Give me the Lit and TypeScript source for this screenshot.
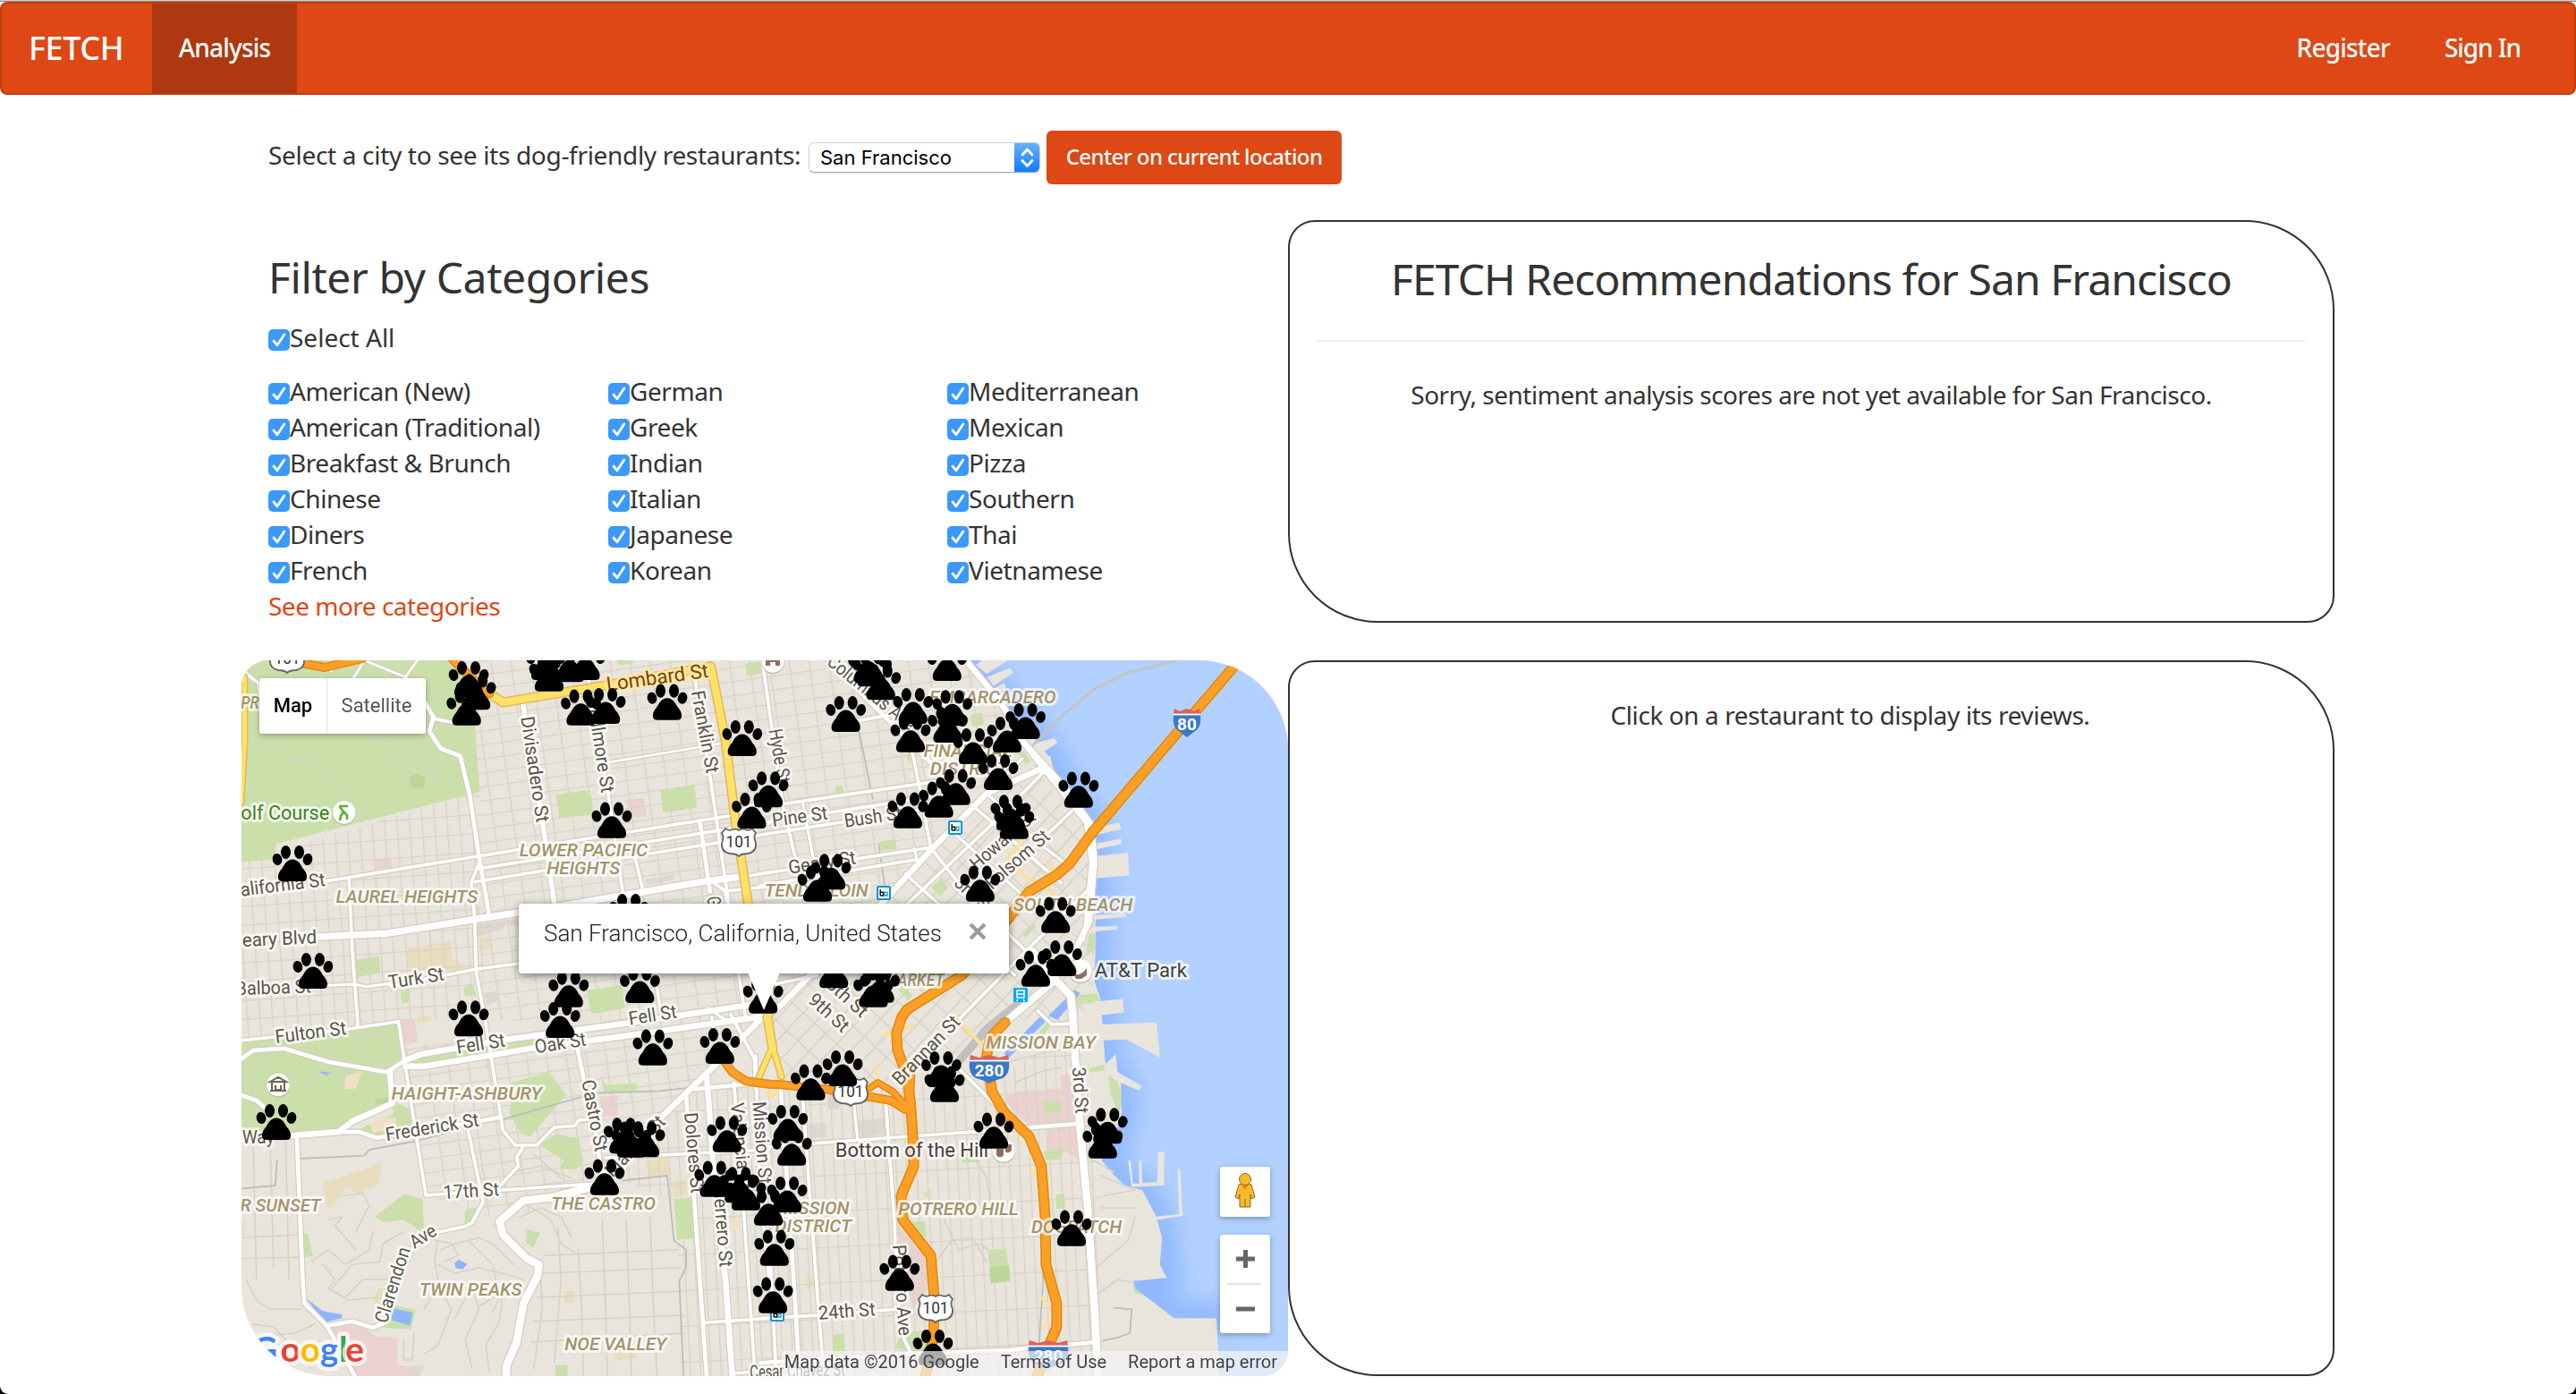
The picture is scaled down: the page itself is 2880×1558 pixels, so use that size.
import { LitElement, html, svg, css } from "lit";
import { customElement } from "lit/decorators.js";

type Pt = [number, number];

/* Survey sheets: origin and scale of each quarter of the street map. */
const SHEETS: Record<string, [number, number, number, number]> = {
  A: [260, 730, 600 / 1568, 1 / 3],
  B: [850, 730, 620 / 1568, 1 / 3],
  C: [260, 1130, 600 / 1568, 1 / 3],
  D: [850, 1130, 620 / 1568, 1 / 3],
};

const at = (s: string, x: number, y: number): Pt => {
  const [ox, oy, sx, sy] = SHEETS[s];
  return [+(ox + x * sx).toFixed(1), +(oy + y * sy).toFixed(1)];
};

/* "A 10,20 30,40 B 5,6" -> SVG points; a letter switches the sheet. */
const pts = (src: string): string => {
  let s = "A";
  const out: string[] = [];
  for (const tok of src.trim().split(/\s+/)) {
    if (SHEETS[tok]) s = tok;
    else {
      const [x, y] = tok.split(",").map(Number);
      out.push(at(s, x, y).join(","));
    }
  }
  return out.join(" ");
};

const WATER =
  "B 590,20 640,90 690,175 760,262 812,340 850,440 925,560 948,640 948,990 945,1100 962,1160 960,1200 D 965,0 972,110 975,170 1020,240 1022,340 1000,440 965,500 1000,550 1030,585 1080,600 1120,690 1136,760 1130,850 1150,895 1055,905 1060,930 1110,975 1170,1030 1290,1030 1295,1150 1300,1240 1520,1240 B 1520,20";

const PIERS = [
  "B 610,40 625,24 700,24 640,70", "B 640,80 705,50 716,65 660,110", "B 660,118 690,100 695,118 672,135",
  "B 765,305 830,285 842,300 780,345", "B 800,345 820,345 826,372 812,378", "B 945,585 1015,568 1020,590 948,610",
  "B 945,640 1020,622 1022,640 948,658", "B 945,680 1040,670 1043,745 945,755", "B 945,878 1032,872 1034,884 945,893",
  "B 940,918 1008,914 1010,926 940,934", "B 945,1168 1025,1160 1028,1205 950,1215",
  "D 960,45 1120,38 1130,155 1035,95 965,98", "D 975,180 1005,145 1010,205 1077,250 1072,267 1000,230",
  "D 1040,502 1047,502 1054,578 1071,578 1071,502 1078,502 1080,576 1123,574 1125,472 1142,472 1142,584 1050,590",
  "D 1110,690 1184,682 1180,530 1187,530 1195,686 1125,700",
];

const PARKS = [
  "A 40,20 640,20 700,120 722,465 125,640 125,692 20,700 20,60", "A 945,475 1045,458 1055,540 955,552",
  "A 1250,460 1350,442 1356,518 1258,535", "A 362,1028 428,1016 432,1072 364,1085", "A 676,1118 700,1112 714,1150 678,1148",
  "A 490,1135 515,1128 520,1168 494,1175", "A 1035,1130 1138,1112 1145,1190 1048,1210", "A 1500,35 1540,28 1545,68 1502,75",
  "A 1120,24 1172,24 1170,34 1130,40", "B 595,205 628,200 632,240 598,246", "B 415,335 432,330 434,356 416,360",
  "B 212,446 232,442 236,470 214,476", "B 338,632 382,624 386,655 342,662", "B 485,785 510,755 532,785 507,815",
  "B 742,945 775,905 778,920 750,955", "B 720,320 740,325 765,362 750,372", "B 860,455 880,465 890,500 870,490",
  "B 890,1148 950,1140 965,1172 895,1176", "B 385,1120 410,1115 430,1150 418,1165", "B 930,940 945,940 948,995 920,1010",
  "C 20,105 480,38 500,160 450,205 465,250 470,320 350,370 310,402 180,412 20,395",
  "C 465,300 520,330 528,410 420,415 365,400 470,345", "C 815,240 925,205 975,280 870,420 845,412 810,345",
  "C 500,165 800,100 890,95 890,110 560,178", "C 898,450 945,412 1010,430 1025,500 1005,530 955,530 968,500",
  "C 1078,222 1090,248 1182,242 1180,268 1085,272", "C 1290,630 1342,624 1350,762 1298,768",
  "C 415,690 500,615 555,630 560,745 500,700 440,708", "C 680,665 712,660 700,708 678,712", "C 860,732 898,745 880,792 858,780",
  "C 205,745 220,745 235,822 208,826", "C 470,985 536,1003 520,1068 430,1060", "C 943,1188 978,1186 980,1230 945,1230",
  "D 920,195 970,180 975,200 925,206", "D 985,215 1005,218 1026,290 1015,345 990,280", "D 800,305 848,300 850,338 802,342",
  "D 805,468 858,462 850,498 806,498", "D 570,490 615,486 622,506 572,508", "D 425,708 465,704 470,760 445,750",
  "D 835,614 860,612 862,662 838,664", "D 645,802 695,796 706,905 650,914", "D 205,1086 236,1082 240,1150 206,1150",
  "D 400,1080 470,1070 480,1150 380,1130", "D 1052,918 1085,925 1086,952 1060,948", "D 780,80 812,36 822,45 800,85",
];
const PARKS_DARK = ["A 517,415 540,405 562,415 560,450 538,456 517,445", "D 650,860 704,852 706,905 652,912", "C 415,295 455,290 450,320 420,310"];
const CLINICS = [
  "A 1150,492 1200,485 1210,545 1180,552 1155,520", "A 415,692 462,685 468,720 418,725", "A 800,895 850,885 850,915 815,915",
  "C 488,28 532,24 542,104 500,112", "C 1072,288 1125,282 1126,350 1080,355", "D 848,215 875,212 880,262 850,266",
  "D 690,290 730,268 895,258 900,375 760,378 720,345", "D 806,400 895,385 898,495 850,465 810,465", "D 385,715 475,830 480,925 430,1000",
  "C 285,1058 370,1048 420,1092 482,1095 482,1190 528,1190 515,1230 355,1230",
];
const SCHOOLS = [
  "A 508,990 635,965 642,1020 675,1050 660,1068 512,1055", "A 728,950 755,945 760,990 722,998", "C 262,578 438,510 425,580 370,612 330,590 295,658 278,658",
  "C 1208,502 1272,492 1276,548 1214,558", "C 1283,570 1325,568 1330,618 1290,622", "C 968,940 998,938 1000,978 970,980",
  "C 1115,1148 1175,1144 1180,1165 1118,1170", "C 425,930 440,930 430,985 410,970", "C 20,708 38,708 36,755 20,755", "C 535,20 580,14 582,30 540,42",
  "D 460,605 486,602 486,628 462,630", "D 130,892 155,890 155,925 132,926", "D 180,685 205,683 207,700 182,702",
];
const SAND = ["C 330,218 378,202 360,260 325,262", "C 400,375 430,352 478,360 478,392 410,408", "C 1450,690 1482,700 1480,735 1455,730"];
const GRAY = ["A 1205,760 1290,742 1290,760 1210,778", "A 715,910 800,895 790,925 715,950", "A 735,1140 775,1132 778,1165 740,1180", "D 190,270 230,300 220,330 190,328", "D 275,368 350,358 356,414 280,422", "D 135,378 185,375 188,422 138,425", "C 482,1190 560,1190 545,1230 520,1230"];
const PONDS = [
  "C 215,962 262,1005 320,1018 320,1030 268,1044", "C 470,996 526,1012 518,1054 462,1036", "C 648,846 660,833 686,848 672,866 652,862",
  "C 252,202 288,208 275,220", "B 815,1215 890,1130 905,1140 840,1230", "D 690,140 790,20 820,20 700,160",
];

/* [width, points] */
type Road = [number, string];
const LANES: string[] = [
  "A 50,320 100,270 200,240 300,230 420,250", "A 120,300 180,360 250,350 280,420 350,480 350,520", "A 400,240 460,320 460,400",
  "A 480,260 520,330 510,460", "A 300,120 330,200 420,230 560,240", "A 600,320 540,300 500,250", "A 560,380 610,400 600,425 540,350",
  "C 60,180 120,120 200,110 320,170", "C 340,130 380,80 440,85 450,120 440,190", "C 210,260 250,220 380,190", "C 130,230 60,280 50,180",
  "C 230,840 280,800 330,850 400,800 410,740", "C 290,930 350,850 430,840 440,780 500,740", "C 330,960 380,900 450,900 520,820",
  "C 265,850 300,900 280,930 340,970 420,960", "C 610,800 650,780 720,760 760,780 820,850", "C 600,850 650,880 720,860 790,880 850,900",
  "C 560,1000 600,920 640,1000 600,1120 560,1150", "C 650,1030 700,920 720,1000 680,1100 700,1200", "C 720,990 790,940 780,1040 740,1120 750,1210",
  "C 690,770 760,850 780,960 760,1010", "C 600,770 590,840 600,900", "C 840,690 900,660 960,690 990,760", "C 860,650 930,700 960,780 1000,810",
  "C 280,700 320,690 300,720 360,800", "C 320,620 380,610 400,650 360,740", "C 560,760 640,780 660,820 620,840",
  "C 40,900 70,970 110,1000 200,1000", "C 60,1050 120,1060 170,1120 230,1200", "C 90,1090 180,1080 240,1050", "C 500,1100 500,1170 525,1170 530,1080",
  "C 820,540 900,520 990,560", "C 880,480 900,500 960,560", "D 600,480 640,560 650,640", "D 460,900 540,770 600,760 640,840",
  "D 520,700 560,800 620,780 700,850", "D 960,660 1060,660", "D 950,860 1040,770 1060,690", "D 970,420 910,480 1000,540", "D 700,170 800,140 860,130",
  "D 720,240 800,200 850,190", "D 960,550 1060,600 970,620", "D 940,960 1010,900 1050,910",
  "C 900,900 905,1000 880,1200", "C 950,720 960,900 940,1180", "C 1010,800 1020,1000 1025,1220", "C 1080,700 1090,1000 1095,1220", "C 1150,700 1160,1000 1165,1220",
  "C 1220,690 1230,1000 1240,1220", "C 900,880 1310,860", "C 890,960 1310,940", "C 880,1040 1320,1020", "C 870,1110 1320,1080", "C 910,820 1300,800",
  "C 60,440 70,900", "C 110,440 120,860", "C 155,440 165,900", "C 26,760 200,750", "C 26,830 205,825", "C 26,670 195,665",
];
const RAILS: string[] = [
  "C 785,365 905,325 1030,285 1070,275 1250,268 1350,255", "C 26,595 125,585 130,500", "C 190,495 385,485 400,465 540,435 640,405",
  "C 1140,568 1270,552 1290,770 1325,800 1325,860 1305,905 1318,1223", "B 275,240 300,380 318,490", "B 335,640 352,780",
  "D 720,350 800,540 800,900 788,1120", "D 970,1105 1010,1095 1045,1080 1050,1000 1000,995",
];
const STREETS: Road[] = [
  [4, "A 30,60 75,100 80,150"], [5, "A 560,160 587,215 575,262 608,320 665,345 692,470 720,680 750,880"], [4, "A 590,220 640,232"],
  [3, "A 385,24 350,90"], [3, "A 385,24 505,80 540,24"], [4, "A 505,80 560,160"], [3, "A 205,24 290,60"],
  [6, "A 848,165 858,240 905,560 940,840"], [4, "A 1040,90 1100,490 1140,800"], [3, "A 1095,367 1425,303"],
  [4, "A 1350,80 1400,450 1450,840"], [5, "A 1365,560 1395,800"], [4, "A 1175,680 1200,800"], [4, "A 270,765 720,680 1455,545 B 0,497 70,505 500,430"],
  [4, "A 720,722 1420,595 1568,570 B 0,570 480,482"], [4, "A 700,768 1420,635 B 0,610 200,572 480,520"],
  [8, "A 235,952 450,940 720,890 950,850 1380,765 1500,748"], [4, "A 1500,748 1568,735 B 0,740 270,690 490,650"], [4, "A 1400,765 1440,798 1568,782 B 0,780 440,692"],
  [4, "A 340,750 350,1000 365,1230 C 365,50"], [4, "A 722,700 697,770 707,880 712,1070 738,1230 C 738,30 790,400 825,450 888,450 940,390 1000,385 1012,365 1060,362"],
  [4, "A 460,1115 620,1080 710,1060 840,1040"], [3.5, "A 230,1117 355,1110 390,1118 460,1108"], [4, "A 1440,800 1500,1230"], [3.5, "A 1390,1190 1440,1230"],
  [4, "B 5,20 35,270 65,520 100,690"], [4, "B 430,330 455,480 480,640"], [3.5, "B 120,500 150,690 165,820"], [4, "B 240,235 420,195"],
  [5, "B 180,10 290,140 400,270 510,400"], [3.5, "B 435,655 445,700"], [7, "B 575,15 680,165 745,300 860,450 935,575 945,700 930,900 885,1010 830,1090"],
  [4, "B 740,300 800,390 920,570 935,700 915,960"], [7, "B 800,385 640,470 490,650 350,830 50,1190 C 1540,30 1420,170 1240,370 1090,540"],
  [4, "B 740,355 600,520 485,660"], [4, "B 480,650 600,830 700,940 850,1110"], [4, "B 600,510 850,770"], [3.5, "B 545,600 740,810"], [3.5, "B 410,740 560,900 720,1080"],
  [4, "B 930,790 750,1000 560,1230"], [4, "B 880,530 640,800 520,930"], [4, "B 800,400 640,590 390,870"], [3.5, "B 640,470 790,640 880,720"],
  [8, "B 700,1230 830,1100"], [9, "B 770,1000 830,1090 878,1150 885,1230 D 883,0 890,150 905,400 925,650 945,1000 955,1223"], [4, "D 785,0 825,45 880,42"],
  [5, "D 950,1110 700,1137 420,1150 0,1180"], [4, "A 1568,1125 B 0,1120 160,1080"], [4, "D 0,457 140,445 600,405"], [5, "D 600,405 900,378"], [4, "D 0,1030 170,1020 400,998"],
  [4, "D 355,310 380,720 385,900 400,1080 430,1160"], [4, "D 120,290 140,620 170,1080 180,1223"], [5, "D 55,210 75,560 100,1000 110,1223"], [3.5, "D 265,310 275,430"],
  [4, "D 550,180 690,345"], [4, "D 10,560 30,860 45,1223"], [4, "C 1528,150 1540,600 1568,900"], [4, "C 1465,240 1495,700 1525,1190"],
  [7, "C 1385,210 1410,600 1440,900 1460,1223"], [5, "C 1325,280 1350,650 1385,1223"], [4, "C 26,98 340,60 485,35 500,150 540,440 565,618 720,605 1050,580"],
  [7, "C 505,165 550,145 800,95 1160,40 1568,-30"], [7, "C 505,185 560,185 900,120 1140,85 1568,15"],
  [5, "C 20,165 60,132 150,125 280,170 450,205 505,165"], [7, "C 460,205 467,310 350,370 310,405 180,417 20,432"], [5, "C 20,280 70,300 110,340"],
  [5, "C 310,405 370,405 420,425 720,370 785,355"], [4, "C 852,450 830,490 835,520 770,600"], [4, "C 685,380 732,640 700,710 680,722 540,755 450,1000"],
  [5, "C 188,425 205,900 210,980 275,1055 360,1230"], [5, "C 275,1055 350,1040 410,1062 445,1045"],
  [9, "C 1050,590 930,625 850,635 780,705 790,750 860,830 895,850 890,890 850,980 830,1110 800,1190 800,1230"],
  [5, "C 1005,110 1030,250 1060,400 1085,600"], [5, "C 1350,262 1568,238"], [4, "C 1090,492 1568,465"], [4, "C 1380,1045 1568,1030"], [4, "C 1400,20 1415,130"],
  [4, "C 1455,10 1525,160 1528,260"], [4, "A 1240,1120 1250,1200"], [4, "C 1460,1215 1568,1205"],
];
const YELLOW: Road[] = [
  [9, "A 1395,45 1080,110 790,165 745,130"], [9, "A 1398,45 1440,290 1470,570 1508,850 1568,1200 D 20,20 35,125"], [6, "D 35,120 60,220"], [6, "D 30,130 -5,225"],
  [6, "A 35,80 35,300 25,500"],
];
const RAMPS: Road[] = [
  [4, "B 740,630 700,690 760,760 800,770 830,810 780,850"], [4, "B 820,700 830,770"], [4, "D 550,20 640,130"], [4, "D 350,80 430,50"], [3.5, "D 325,180 335,240"],
  [3.5, "D 20,270 35,290 50,265"], [3, "D 765,530 778,555"], [3, "D 795,960 815,990"], [3, "D 800,1065 812,1040"],
];
const FREEWAYS: Road[] = [
  [9, "A 640,15 690,75 750,135"], [8, "A 160,25 270,48 380,18"],
  [10, "B 1350,30 1180,265 940,600 875,705 840,742 760,800 700,890 570,1080 415,1195 D 400,20 385,75 388,130 415,220 425,310 432,430 434,520 398,620 403,700 482,820 492,960 490,1090 465,1235"],
  [8, "C 1432,160 1460,205 1500,235 1568,245 D 60,247 200,265 370,300 410,330"], [6, "D 310,258 332,240 375,270 415,320"], [5, "D 430,200 425,320"],
  [10, "D 692,38 650,90 640,150 655,270 690,340 760,420 795,520 805,680 808,850 838,980 838,1060 820,1110 780,1235"],
];

/* [text, sheet, x1, y1, x2, y2] along the baseline */
type Label = [string, string, number, number, number, number];
const STREET_NAMES: Label[] = [
  ["Divisadero St", "A", 842, 215, 888, 570], ["Fillmore St", "A", 1040, 190, 1078, 470], ["Franklin St", "A", 1340, 130, 1385, 405],
  ["Golf Course", "A", -14, 557, 283, 557], ["California St", "A", -8, 820, 272, 780], ["Geary Blvd", "A", -8, 986, 247, 973], ["Turk St", "A", 458, 1125, 620, 1096],
  ["Balboa St", "A", 10, 1147, 230, 1138], ["Fell St", "C", 1160, 47, 1300, 22], ["G", "A", 1386, 818, 1389, 848],
  ["Hyde St", "B", 24, 258, 50, 438], ["Columbus Ave", "B", 185, 35, 420, 262], ["Pine St", "B", 36, 582, 192, 556], ["Bush St", "B", 240, 584, 402, 556], ["Geary St", "B", 82, 740, 272, 706],
  ["Howard St", "B", 612, 730, 782, 555], ["Folsom St", "B", 655, 795, 822, 620], ["3rd St", "B", 545, 775, 640, 880],
  ["9th St", "B", 132, 1168, 232, 1275], ["8th St", "B", 183, 1115, 285, 1225],
  ["Fulton St", "C", 127, 108, 334, 78], ["Fell St", "C", 657, 143, 798, 118], ["Oak St", "C", 886, 142, 1035, 115], ["Castro St", "C", 1020, 235, 1060, 473],
  ["Frederick St", "C", 450, 436, 722, 385], ["Way", "C", 28, 445, 122, 445], ["17th St", "C", 617, 630, 780, 618], ["Market St", "C", 1110, 560, 1268, 375],
  ["Dolores St", "C", 1320, 342, 1340, 613], ["Guerrero St", "C", 1402, 555, 1424, 860], ["Valencia St", "C", 1455, 310, 1480, 600], ["Mission St", "C", 1520, 305, 1538, 580],
  ["Clarendon", "C", 450, 1050, 520, 800], ["Ave", "C", 532, 798, 600, 748], ["Brannan St", "D", 395, 252, 568, 40], ["3rd St", "D", 882, 190, 892, 345],
  ["Potrero Ave", "D", 374, 785, 392, 1090], ["24th St", "D", 166, 1034, 326, 1020], ["Cesar Chavez St", "C", 1512, 1232, 1790, 1222],
];
const AREA_NAMES: Label[] = [
  ["PR", "A", 24, 187, 78, 187], ["LOWER PACIFIC", "A", 838, 682, 1213, 682], ["HEIGHTS", "A", 918, 742, 1132, 742], ["LAUREL HEIGHTS", "A", 302, 838, 716, 838],
  ["EMBARCADERO", "B", 478, 168, 836, 168], ["FINANCIAL", "B", 462, 348, 712, 348], ["DISTRICT", "B", 480, 408, 700, 408], ["TENDERLOIN", "B", 12, 816, 305, 816],
  ["SOUTH BEACH", "B", 716, 865, 1053, 865], ["MARKET", "B", 350, 1117, 520, 1117], ["HAIGHT-ASHBURY", "C", 464, 297, 904, 297], ["R SUNSET", "C", 22, 672, 258, 672],
  ["THE CASTRO", "C", 930, 667, 1236, 667], ["TWIN PEAKS", "C", 546, 955, 845, 955], ["NOE VALLEY", "C", 970, 1137, 1268, 1137], ["MISSION BAY", "D", 638, 127, 948, 127],
  ["MISSION", "D", 50, 682, 252, 682], ["DISTRICT", "D", 42, 742, 258, 742], ["POTRERO HILL", "D", 390, 685, 730, 685], ["DOGPATCH", "D", 766, 745, 1022, 745],
];
const PLACE_NAMES: Label[] = [["AT&T Park", "B", 945, 1085, 1206, 1085], ["Bottom of the Hill", "D", 212, 488, 645, 488]];

/* Restaurant markers: sheet, centre x, bottom y */
const PAWS =
  "A:690,147 A:711,190 A:684,242 A:915,90 A:925,128 A:985,97 A:1031,90 A:1018,242 A:1090,237 A:1270,224 A:1489,345 A:1517,588 B:23,517 A:1108,620 A:175,765 A:235,1125 A:1158,927 A:982,1187 A:1190,1173 C:690,85 C:957,90 " +
  "B:305,100 B:315,112 B:341,157 B:528,93 B:432,237 B:425,332 B:543,244 B:530,300 B:602,372 B:698,333 B:750,288 B:673,459 B:900,518 B:242,264 B:417,587 B:505,551 B:553,509 B:708,595 B:718,623 B:622,833 B:200,793 B:162,833 " +
  "B:835,938 B:853,1083 B:779,1118 B:208,1123 B:338,1172 B:320,1187 B:8,1208 C:1228,182 C:1424,177 C:128,432 C:1143,478 C:1165,491 C:1205,490 C:1087,617 C:1445,473 C:1408,623 C:1480,643 C:1500,668 D:23,719 D:76,675 " +
  "D:143,299 D:233,252 D:512,255 D:521,305 D:78,435 D:89,518 D:40,854 D:36,1013 D:660,461 D:982,445 D:968,494 D:394,938 D:880,788 D:488,1188";

const LOGO: [string, number, string][] = [
  ["G", 282, "#4285f4"], ["o", 313.5, "#ea4335"], ["o", 335.5, "#fbbc05"], ["g", 358, "#4285f4"], ["l", 379, "#34a853"], ["e", 386, "#ea4335"],
];

const poly = (list: string[], cls: string) => list.map((p) => svg`<polygon class=${cls} points=${pts(p)} />`);
const lines = (list: Road[], cls: string, extra = 0) =>
  list.map(([w, p]) => svg`<polyline class=${cls} stroke-width=${w + extra} points=${pts(p)} />`);
const label = ([t, s, x1, y1, x2, y2]: Label, cls: string) => {
  const [ax, ay] = at(s, x1, y1);
  const [bx, by] = at(s, x2, y2);
  const len = Math.hypot(bx - ax, by - ay).toFixed(1);
  const deg = ((Math.atan2(by - ay, bx - ax) * 180) / Math.PI).toFixed(1);
  return svg`<text class=${cls} textLength=${len} lengthAdjust="spacingAndGlyphs" transform="translate(${ax} ${ay}) rotate(${deg})">${t}</text>`;
};

@customElement("city-map")
export class CityMap extends LitElement {
  static styles = css`
    :host { display: block; position: relative; width: 1170px; height: 800px; overflow: hidden; border-radius: 30px 100px 30px 100px; background: #e9e5dc; font-family: Roboto, "Liberation Sans", sans-serif; letter-spacing: 0; }
    .canvas { display: block; width: 1170px; height: 800px; }
    .water { fill: #b3d1ff; }
    .shore { fill: none; stroke: #86b1ff; stroke-width: 34; opacity: 0.8; }
    .land { fill: #e9e5dc; }
    .park { fill: #cadfaa; }
    .park-dark { fill: #bdd699; }
    .clinic { fill: #ebd2cf; }
    .school { fill: #e8ddbd; }
    .sand { fill: #f0e0c6; }
    .gray { fill: #dcd7d0; }
    .pond { fill: #8db6ff; }
    polyline { fill: none; stroke-linejoin: round; stroke-linecap: round; }
    .lane { stroke: #d8d2c6; stroke-width: 1.6; }
    .rail { stroke: #bdbdbd; stroke-width: 1.8; }
    .case { stroke: #d4cec1; }
    .street { stroke: #fff; }
    .yellow-case { stroke: #e2b958; }
    .yellow { stroke: #ffe168; }
    .ramp { stroke: #ffe095; }
    .fwy-case { stroke: #e18a06; }
    .fwy { stroke: #fb9f29; }
    text { paint-order: stroke; stroke: rgba(255, 255, 255, 0.72); stroke-width: 6px; stroke-linejoin: round; }
    .st { font-size: 21px; fill: #5a5546; }
    .lombard { font-size: 22px; fill: #7a3f0c; stroke: rgba(255, 235, 170, 0.8); }
    .area { font-size: 20px; font-style: italic; font-weight: 500; fill: #a3946a; }
    .place { font-size: 22px; fill: #45413a; }
    .golf { font-size: 22px; fill: #3e8122; }
    .num { font-size: 19px; fill: #333; stroke: none; text-anchor: middle; }
    .inum { font-size: 19px; font-weight: 700; fill: #fff; stroke: none; text-anchor: middle; }
    .logo { font-family: Lato, "Open Sans", sans-serif; font-size: 39px; font-weight: 700; stroke-width: 9px; stroke: rgba(255, 255, 255, 0.7); }
    .ctl { position: absolute; background: #fff; border-radius: 3px; box-shadow: 0 2px 6px rgba(0, 0, 0, 0.3); }
    .types { left: 20px; top: 20px; width: 186px; height: 62px; display: flex; font-size: 22px; line-height: 61px; }
    .type { flex: 1; text-align: center; color: #565656; }
    .type-on { flex: 0 0 75px; color: #000; font-weight: 500; border-right: 1px solid #ddd; }
    .peg { left: 1094px; top: 566px; width: 56px; height: 56px; }
    .zoom { left: 1094px; top: 642px; width: 56px; height: 110px; }
    .glyph { display: block; }
    .info { position: absolute; left: 310px; top: 272px; width: 548px; height: 78px; background: #fff; border-radius: 4px; box-shadow: 0 2px 10px rgba(0, 0, 0, 0.5); }
    .info-text { padding-left: 28px; line-height: 66px; font-size: 26px; font-weight: 300; color: #222; white-space: nowrap; }
    .tip { position: absolute; left: 255px; top: 77px; }
    .close { position: absolute; left: 503px; top: 21px; }
    .legal { position: absolute; right: 0; bottom: 0; width: 566px; height: 28px; box-sizing: border-box; display: flex; justify-content: flex-end; gap: 24px; padding: 0 12px 0 0; background: rgba(245, 245, 245, 0.7); font-size: 20px; line-height: 25px; color: #444; white-space: nowrap; }
  `;

  private usShield(x: number, y: number) {
    return svg`<g transform="translate(${x - 20} ${y - 15})">
      <path d="M5 1 Q9 4 13 2 Q17 1 20 3 Q23 1 27 2 Q31 4 35 1 L39 6 Q36 10 39 17 Q40 27 30 29 Q23 29 20 32 Q17 29 10 29 Q0 27 1 17 Q4 10 1 6 Z" fill="#fff" stroke="#666" stroke-width="1.8"/>
      <text class="num" x="20" y="22" textLength="29" lengthAdjust="spacingAndGlyphs">101</text></g>`;
  }

  private interstate(x: number, y: number, w: number, n: string) {
    const h = w / 2;
    return svg`<g transform="translate(${x} ${y})">
      <path d="M${-h + 1} -8 H${h - 1} Q${h + 1} 6 ${h - 8} 11 Q4 14 0 17 Q-4 14 ${-h + 8} 11 Q${-h - 1} 6 ${-h + 1} -8Z" fill="#3a78c8"/>
      <path d="M${-h + 1} -9 L${-h + 2} -15 L${-h / 2} -12 L0 -15 L${h / 2} -12 L${h - 2} -15 L${h - 1} -9Z" fill="#d9625e"/>
      <rect x=${-h + 1} y="-9.4" width=${w - 2} height="1.8" fill="#fff"/>
      <text class="inum" x="0" y="9">${n}</text></g>`;
  }

  private transit(x: number, y: number) {
    return svg`<g transform="translate(${x - 8} ${y - 8})"><rect x="1" y="1" width="14" height="14" rx="1.5" fill="#fff" stroke="#0a94d8" stroke-width="2"/>
      <path d="M4.2 4 V11 M4.2 7.2 H7.5 V11 H4.2" stroke="#111" stroke-width="1.5" fill="none"/><path d="M9 7.2 H12 V11 H9Z" stroke="#0a94d8" stroke-width="1.3" fill="none"/></g>`;
  }

  private badge(x: number, y: number) {
    return svg`<circle cx=${x} cy=${y + 1} r="13" fill="#b9b4a8"/><circle cx=${x} cy=${y} r="12.7" fill="#fff"/>`;
  }

  render() {
    const paws = PAWS.split(" ").map((p) => {
      const [s, c] = p.split(":");
      const [x, y] = c.split(",").map(Number);
      return at(s, x, y);
    });
    return html`
      <svg class="canvas" viewBox="270 738 1170 800">
        <defs>
          <pattern id="g1" width="22" height="15.5" patternUnits="userSpaceOnUse" patternTransform="rotate(-8)"><path d="M0 0H22M0 0V15.5" stroke="#d8d2c6" stroke-width="2.6" fill="none"/></pattern>
          <pattern id="g2" width="11.5" height="40" patternUnits="userSpaceOnUse" patternTransform="rotate(-3)"><path d="M0 0H11.5M0 0V40" stroke="#d8d2c6" stroke-width="2.6" fill="none"/></pattern>
          <pattern id="g3" width="27" height="17" patternUnits="userSpaceOnUse" patternTransform="rotate(-47)"><path d="M0 0H27M0 0V17" stroke="#d8d2c6" stroke-width="2.8" fill="none"/></pattern>
          <pattern id="g4" width="14" height="21" patternUnits="userSpaceOnUse" patternTransform="rotate(-4)"><path d="M0 0H14M0 0V21" stroke="#d8d2c6" stroke-width="2.6" fill="none"/></pattern>
          <filter id="soft" x="-20%" y="-20%" width="140%" height="140%"><feGaussianBlur stdDeviation="13"/></filter>
          <filter id="edge"><feGaussianBlur stdDeviation="0.7"/></filter>
          <clipPath id="bay"><polygon points=${pts(WATER)} /></clipPath>
          <g id="paw"><ellipse cx="-17" cy="-24.5" rx="5.3" ry="6.6" transform="rotate(-14 -17 -24.5)"/><ellipse cx="-7.5" cy="-32.5" rx="5.5" ry="7.6"/><ellipse cx="7.5" cy="-32.5" rx="5.5" ry="7.6"/><ellipse cx="17" cy="-24.5" rx="5.3" ry="6.6" transform="rotate(14 17 -24.5)"/>
          <path d="M0 -24.5 C6 -24.5 9 -19 11.5 -14.5 C15.5 -10.5 17.5 -5 15 -1.2 Q14 0 10.5 0 H-10.5 Q-14 0 -15 -1.2 C-17.5 -5 -15.5 -10.5 -11.5 -14.5 C-9 -19 -6 -24.5 0 -24.5Z"/></g>
        </defs>
        <rect x="270" y="738" width="1170" height="800" fill="#e9e5dc"/>
        ${poly(GRAY, "gray")}${poly(CLINICS, "clinic")}${poly(SCHOOLS, "school")}
        <polygon points=${pts("A 700,20 B 590,20 850,430 740,355 490,650 300,890 0,1240 A 735,1230 722,465")} fill="url(#g1)"/>
        <polygon points=${pts("A 20,700 722,465 735,1230 C 485,35 20,98")} fill="url(#g4)"/>
        <polygon points=${pts("B 740,355 945,600 945,1100 D 900,60 700,20 430,240 60,230 B 0,1200 490,650")} fill="url(#g3)"/>
        <polygon points=${pts("C 500,120 1568,-30 1350,260 1085,600 790,700 565,618")} fill="url(#g1)"/>
        <polygon points=${pts("C 1090,540 1380,250 D 440,250 700,200 900,60 960,550 955,1235 C 1310,1235 1300,800 1285,640")} fill="url(#g2)"/>
        ${poly(PARKS, "park")}${poly(PARKS_DARK, "park-dark")}${poly(SAND, "sand")}${poly(PONDS, "pond")}
        <polygon class="water" points=${pts(WATER)} />
        <g clip-path="url(#bay)"><polyline class="shore" filter="url(#soft)" points=${pts(WATER.split("1295,1150")[0])} /></g>
        ${poly(PIERS, "land")}
        <polyline points=${pts("B 770,310 850,215 945,120 1040,65 1190,20")} stroke="#c3c3c3" stroke-width="3"/>
        ${LANES.map((l) => svg`<polyline class="lane" points=${pts(l)} />`)}
        ${RAILS.map((l) => svg`<polyline class="rail" points=${pts(l)} />`)}
        <polyline points=${pts("B 680,1230 740,1165 D 640,60 560,170")} stroke="#c0c0c0" stroke-width="9"/>
        ${lines(STREETS, "case", 2)}${lines(STREETS, "street", -0.4)}
        ${lines(RAMPS, "ramp")}
        ${lines(YELLOW, "yellow-case", 2)}${lines(YELLOW, "yellow", -1)}
        ${lines(FREEWAYS, "fwy-case", 2)}${lines(FREEWAYS, "fwy", -1)}
        ${this.badge(384.7, 908)}<path d="M379 901h10M380 902l4 5-3 5-1 5M384 907l4 4v5" stroke="#5fae2e" stroke-width="2.6" fill="none"/>
        ${this.badge(311, 1212.5)}<path d="M302 1209l9-5 9 5zM304 1210v9M318 1210v9M302 1219h18M308 1213v5h6v-5" stroke="#6b6658" stroke-width="2" fill="none"/>
        ${this.badge(864, 739)}<path d="M856 735h16v9h-5v-4h-6v4h-5z" fill="#8d6e63"/>
        ${this.badge(1208, 1085)}<path d="M1200 1088q8 4 15-6v8l-6 4h-6z" fill="#8d6e63"/>
        ${this.badge(1122, 1286)}<path d="M1114 1284h8v7q-4 5-8 0zM1123 1279h8v7q-4 4-7 1z" fill="#8d6e63"/>
        ${STREET_NAMES.map((l) => label(l, l[0] === "Golf Course" ? "golf" : "st"))}
        ${label(["Lombard St", "A", 1095, 127, 1392, 80], "lombard")}
        ${AREA_NAMES.map((l) => label(l, "area"))}
        ${PLACE_NAMES.map((l) => label(l, "place"))}
        ${this.usShield(826, 940)}${this.usShield(951, 1219)}${this.usShield(1046, 1461)}${this.usShield(321, 735)}
        ${this.interstate(1327, 807, 32, "80")}${this.interstate(1106, 1194, 46, "280")}${this.interstate(1172, 1513, 46, "280")}
        ${this.transit(1068, 925)}${this.transit(988, 998)}${this.transit(869, 1469)}
        <g transform="translate(1133 1104)"><rect width="16" height="16" rx="1.5" fill="#03a9f4"/><path d="M4 3h8v8H4zM4 7h8M5 13l-1.5 2M11 13l1.5 2" stroke="#fff" stroke-width="1.5" fill="none"/></g>
        <g filter="url(#edge)">${paws.map(([x, y]) => svg`<use href="#paw" x=${x} y=${y} />`)}</g>
        <g>${LOGO.map(([c, x, f]) => svg`<text class="logo" x=${x} y="1522" fill=${f}>${c}</text>`)}</g>
      </svg>
      <div class="info">
        <div class="info-text">San Francisco, California, United States</div>
        <svg class="tip" width="38" height="43" viewBox="0 0 38 43"><path d="M1 0H37L19 42Z" fill="#fff"/></svg>
        <svg class="close" width="20" height="20" viewBox="0 0 20 20"><path d="M2 2L18 18M18 2L2 18" stroke="#9b9b9b" stroke-width="4.2"/></svg>
      </div>
      <div class="ctl types"><div class="type type-on">Map</div><div class="type">Satellite</div></div>
      <div class="ctl peg"><svg class="glyph" width="56" height="56" viewBox="0 0 56 56">
        <path d="M21 20Q28 17 35 20L39 34L35 36L34 31V45H22V31L21 36L17 34Z" fill="#fbb829" stroke="#8a6a2a" stroke-width="1"/><path d="M28 36V45" stroke="#8a6a2a" stroke-width="1"/>
        <path d="M24 20H32L28 26Z" fill="#e8851c"/><circle cx="28" cy="14" r="6.5" fill="#fbb829" stroke="#8a6a2a" stroke-width="1"/></svg></div>
      <div class="ctl zoom"><svg class="glyph" width="56" height="110" viewBox="0 0 56 110"><path d="M18 27H39M28.5 17V37M18 83H39" stroke="#666" stroke-width="5"/><path d="M8 55H46" stroke="#e4e4e4" stroke-width="2"/></svg></div>
      <div class="legal"><span>Map data ©2016 Google</span><span>Terms of Use</span><span>Report a map error</span></div>
    `;
  }
}

const CATEGORIES = [
  ["American (New)", "American (Traditional)", "Breakfast & Brunch", "Chinese", "Diners", "French"],
  ["German", "Greek", "Indian", "Italian", "Japanese", "Korean"],
  ["Mediterranean", "Mexican", "Pizza", "Southern", "Thai", "Vietnamese"],
];

@customElement("app-root")
export class AppRoot extends LitElement {
  static styles = css`
    :host { display: block; width: 2880px; height: 1558px; overflow: hidden; background: #000; }
    .page { width: 2880px; height: 1558px; box-sizing: border-box; background: #fff; border-radius: 0 0 9px 9px; overflow: hidden; font-family: "Noto Sans", "Open Sans", sans-serif; font-size: 28px; line-height: 40px; letter-spacing: -0.36px; color: #333; white-space: nowrap; }
    .edge { height: 2px; background: linear-gradient(#cfd3cd 50%, #8e8078 50%); }
    .nav { display: flex; height: 104px; box-sizing: border-box; border: 2px solid #bf3e11; border-radius: 8px; background: #dd4814; color: #fff; line-height: 99px; letter-spacing: -0.8px; }
    .brand { width: 168px; box-sizing: border-box; padding-left: 30px; font-size: 36px; font-weight: 500; letter-spacing: -0.4px; }
    .tab { width: 162px; text-align: center; background: #ae3910; font-weight: 500; }
    .right { margin-left: auto; display: flex; gap: 61px; padding-right: 60px; font-weight: 500; }
    .sign { letter-spacing: -1.1px; }
    .picker { display: flex; align-items: center; height: 60px; padding: 40px 0 40px 300px; }
    .prompt { width: 604px; margin-top: -6px; letter-spacing: -0.32px; }
    .select { width: 259px; height: 34px; display: flex; box-sizing: border-box; border: 1px solid #cfcfcf; border-bottom-color: #aaa; border-radius: 6px; margin-right: 7px; box-shadow: 0 1px 1px rgba(0, 0, 0, 0.12); font: 22px/33px Inter, Roboto, sans-serif; letter-spacing: 0; color: #000; overflow: hidden; }
    .city { flex: 1; padding-left: 12px; }
    .arrows { width: 29px; background: linear-gradient(#6cb3fa, #0a7bff); margin: -1px; }
    .btn { width: 330px; height: 60px; border-radius: 6px; background: #dd4814; color: #fff; font-size: 24px; font-weight: 500; letter-spacing: -0.6px; line-height: 58px; text-align: center; }
    .grid { display: grid; grid-template-columns: 1170px 1170px; grid-template-rows: 450px 800px; row-gap: 42px; padding-left: 270px; }
    .filters { padding: 38px 0 0 30px; }
    .h { font-size: 48px; line-height: 52px; letter-spacing: -0.42px; }
    .all { margin-top: 21px; margin-bottom: 20px; letter-spacing: 0; }
    .row { display: flex; height: 40px; }
    .box { display: block; margin-top: 11px; width: 24px; height: 24px; }
    .cols { display: grid; grid-template-columns: 380px 379px 1fr; letter-spacing: -0.42px; }
    .more { color: #dd4814; letter-spacing: -0.5px; }
    .panel { box-sizing: border-box; border: 2px solid #333; border-radius: 30px 100px 30px 100px; padding: 38px 30px; text-align: center; letter-spacing: -0.48px; }
    .title { letter-spacing: -0.92px; }
    .rule { height: 2px; background: #eee; margin-top: 42px; margin-bottom: 39px; }
    .reviews { padding-left: 117px; padding-top: 39px; letter-spacing: -0.42px; }
  `;

  private check() {
    return html`<svg class="box" viewBox="0 0 24 24"><rect width="24" height="24" rx="5" fill="#3b99fc"/><path d="M6 13L10 17.8L17.8 6" fill="none" stroke="#fff" stroke-width="2.8" stroke-linecap="round" stroke-linejoin="round"/></svg>`;
  }

  render() {
    return html`
      <div class="page">
        <div class="edge"></div>
        <div class="nav">
          <div class="brand">FETCH</div>
          <div class="tab">Analysis</div>
          <div class="right"><span>Register</span><span class="sign">Sign In</span></div>
        </div>
        <div class="picker">
          <div class="prompt">Select a city to see its dog-friendly restaurants:</div>
          <div class="select">
            <div class="city">San Francisco</div>
            <svg class="arrows" width="29" height="34" viewBox="0 0 29 34"><path d="M9 14L14.5 8L20 14M9 20.5L14.5 26.5L20 20.5" fill="none" stroke="#fff" stroke-width="2.8" stroke-linecap="round" stroke-linejoin="round"/></svg>
          </div>
          <div class="btn">Center on current location</div>
        </div>
        <div class="grid">
          <div class="filters">
            <div class="h">Filter by Categories</div>
            <div class="row all">${this.check()}<span>Select All</span></div>
            <div class="cols">
              ${CATEGORIES.map((col) => html`<div>${col.map((c) => html`<div class="row">${this.check()}<span>${c}</span></div>`)}</div>`)}
            </div>
            <div class="more">See more categories</div>
          </div>
          <div class="panel">
            <div class="h title">FETCH Recommendations for San Francisco</div>
            <div class="rule"></div>
            <div>Sorry, sentiment analysis scores are not yet available for San Francisco.</div>
          </div>
          <city-map></city-map>
          <div class="panel reviews">Click on a restaurant to display its reviews.</div>
        </div>
      </div>
    `;
  }
}
